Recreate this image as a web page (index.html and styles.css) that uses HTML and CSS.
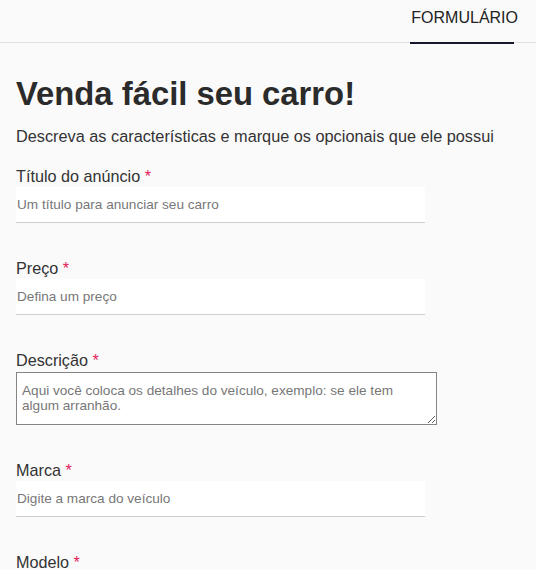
FILE: index.html
```html
<!DOCTYPE html>
<html lang="pt-BR">
<head>
<meta charset="utf-8">
<title>Formulário</title>
<link rel="stylesheet" href="styles.css">
</head>
<body>
<header class="topbar">
  <nav class="tabs">
    <span class="tab tab-active">FORMULÁRIO</span>
  </nav>
</header>
<main class="content">
  <h1 class="title">Venda fácil seu carro!</h1>
  <p class="subtitle">Descreva as características e marque os opcionais que ele possui</p>
  <form class="form">
    <div class="field">
      <label class="label">Título do anúncio <span class="req">*</span></label>
      <input class="input" type="text" placeholder="Um título para anunciar seu carro">
    </div>
    <div class="field">
      <label class="label">Preço <span class="req">*</span></label>
      <input class="input" type="text" placeholder="Defina um preço">
    </div>
    <div class="field field-area">
      <label class="label">Descrição <span class="req">*</span></label>
      <textarea class="textarea" placeholder="Aqui você coloca os detalhes do veículo, exemplo: se ele tem algum arranhão."></textarea>
    </div>
    <div class="field">
      <label class="label">Marca <span class="req">*</span></label>
      <input class="input" type="text" placeholder="Digite a marca do veículo">
    </div>
    <div class="field">
      <label class="label">Modelo <span class="req">*</span></label>
      <input class="input" type="text" placeholder="Digite o modelo do veículo">
    </div>
  </form>
</main>
</body>
</html>
```

FILE: styles.css
```css
* { box-sizing: border-box; }
html, body { margin: 0; padding: 0; }
body {
  background: #fafafa;
  font-family: "Liberation Sans", Arial, sans-serif;
  color: #333;
  overflow: hidden;
}
.topbar {
  height: 43px;
  border-bottom: 1px solid #e2e2e2;
  display: flex;
  justify-content: flex-end;
  padding-right: 18px;
}
.tabs { display: flex; }
.tab {
  position: relative;
  display: block;
  padding-top: 9px;
  font-size: 16px;
  line-height: 18px;
  color: #222;
}
.tab-active::after {
  content: "";
  position: absolute;
  left: -1px;
  right: 4px;
  bottom: -2px;
  height: 2px;
  background: #15172c;
}
.content {
  padding: 0 16px;
}
.title {
  margin: 32px 0 0;
  font-size: 32.8px;
  line-height: 37px;
  font-weight: bold;
  color: #2b2b2b;
}
.subtitle {
  margin: 15px 0 0;
  font-size: 16.3px;
  line-height: 18px;
  color: #333;
}
.form {
  margin-top: 22px;
}
.field {
  display: flex;
  flex-direction: column;
  margin-bottom: 36px;
}
.field-area { margin-bottom: 36px; }
.label {
  font-size: 16.2px;
  line-height: 18px;
  color: #333;
  margin-bottom: 2px;
}
.req { color: #e2235a; }
.input {
  width: 409px;
  height: 36px;
  border: none;
  border-bottom: 1px solid #cfcfcf;
  background: #fff;
  padding: 0 0 0 1px;
  font-family: "Liberation Sans", Arial, sans-serif;
  font-size: 13.6px;
  color: #333;
  outline: none;
}
.input::placeholder, .textarea::placeholder { color: #777; }
.textarea {
  width: 421px;
  height: 53px;
  margin-top: 1px;
  border: 1px solid #858585;
  background: #fff;
  padding: 10px 20px 4px 5px;
  font-family: "Liberation Sans", Arial, sans-serif;
  font-size: 13.6px;
  line-height: 15px;
  color: #333;
  resize: vertical;
}
```
